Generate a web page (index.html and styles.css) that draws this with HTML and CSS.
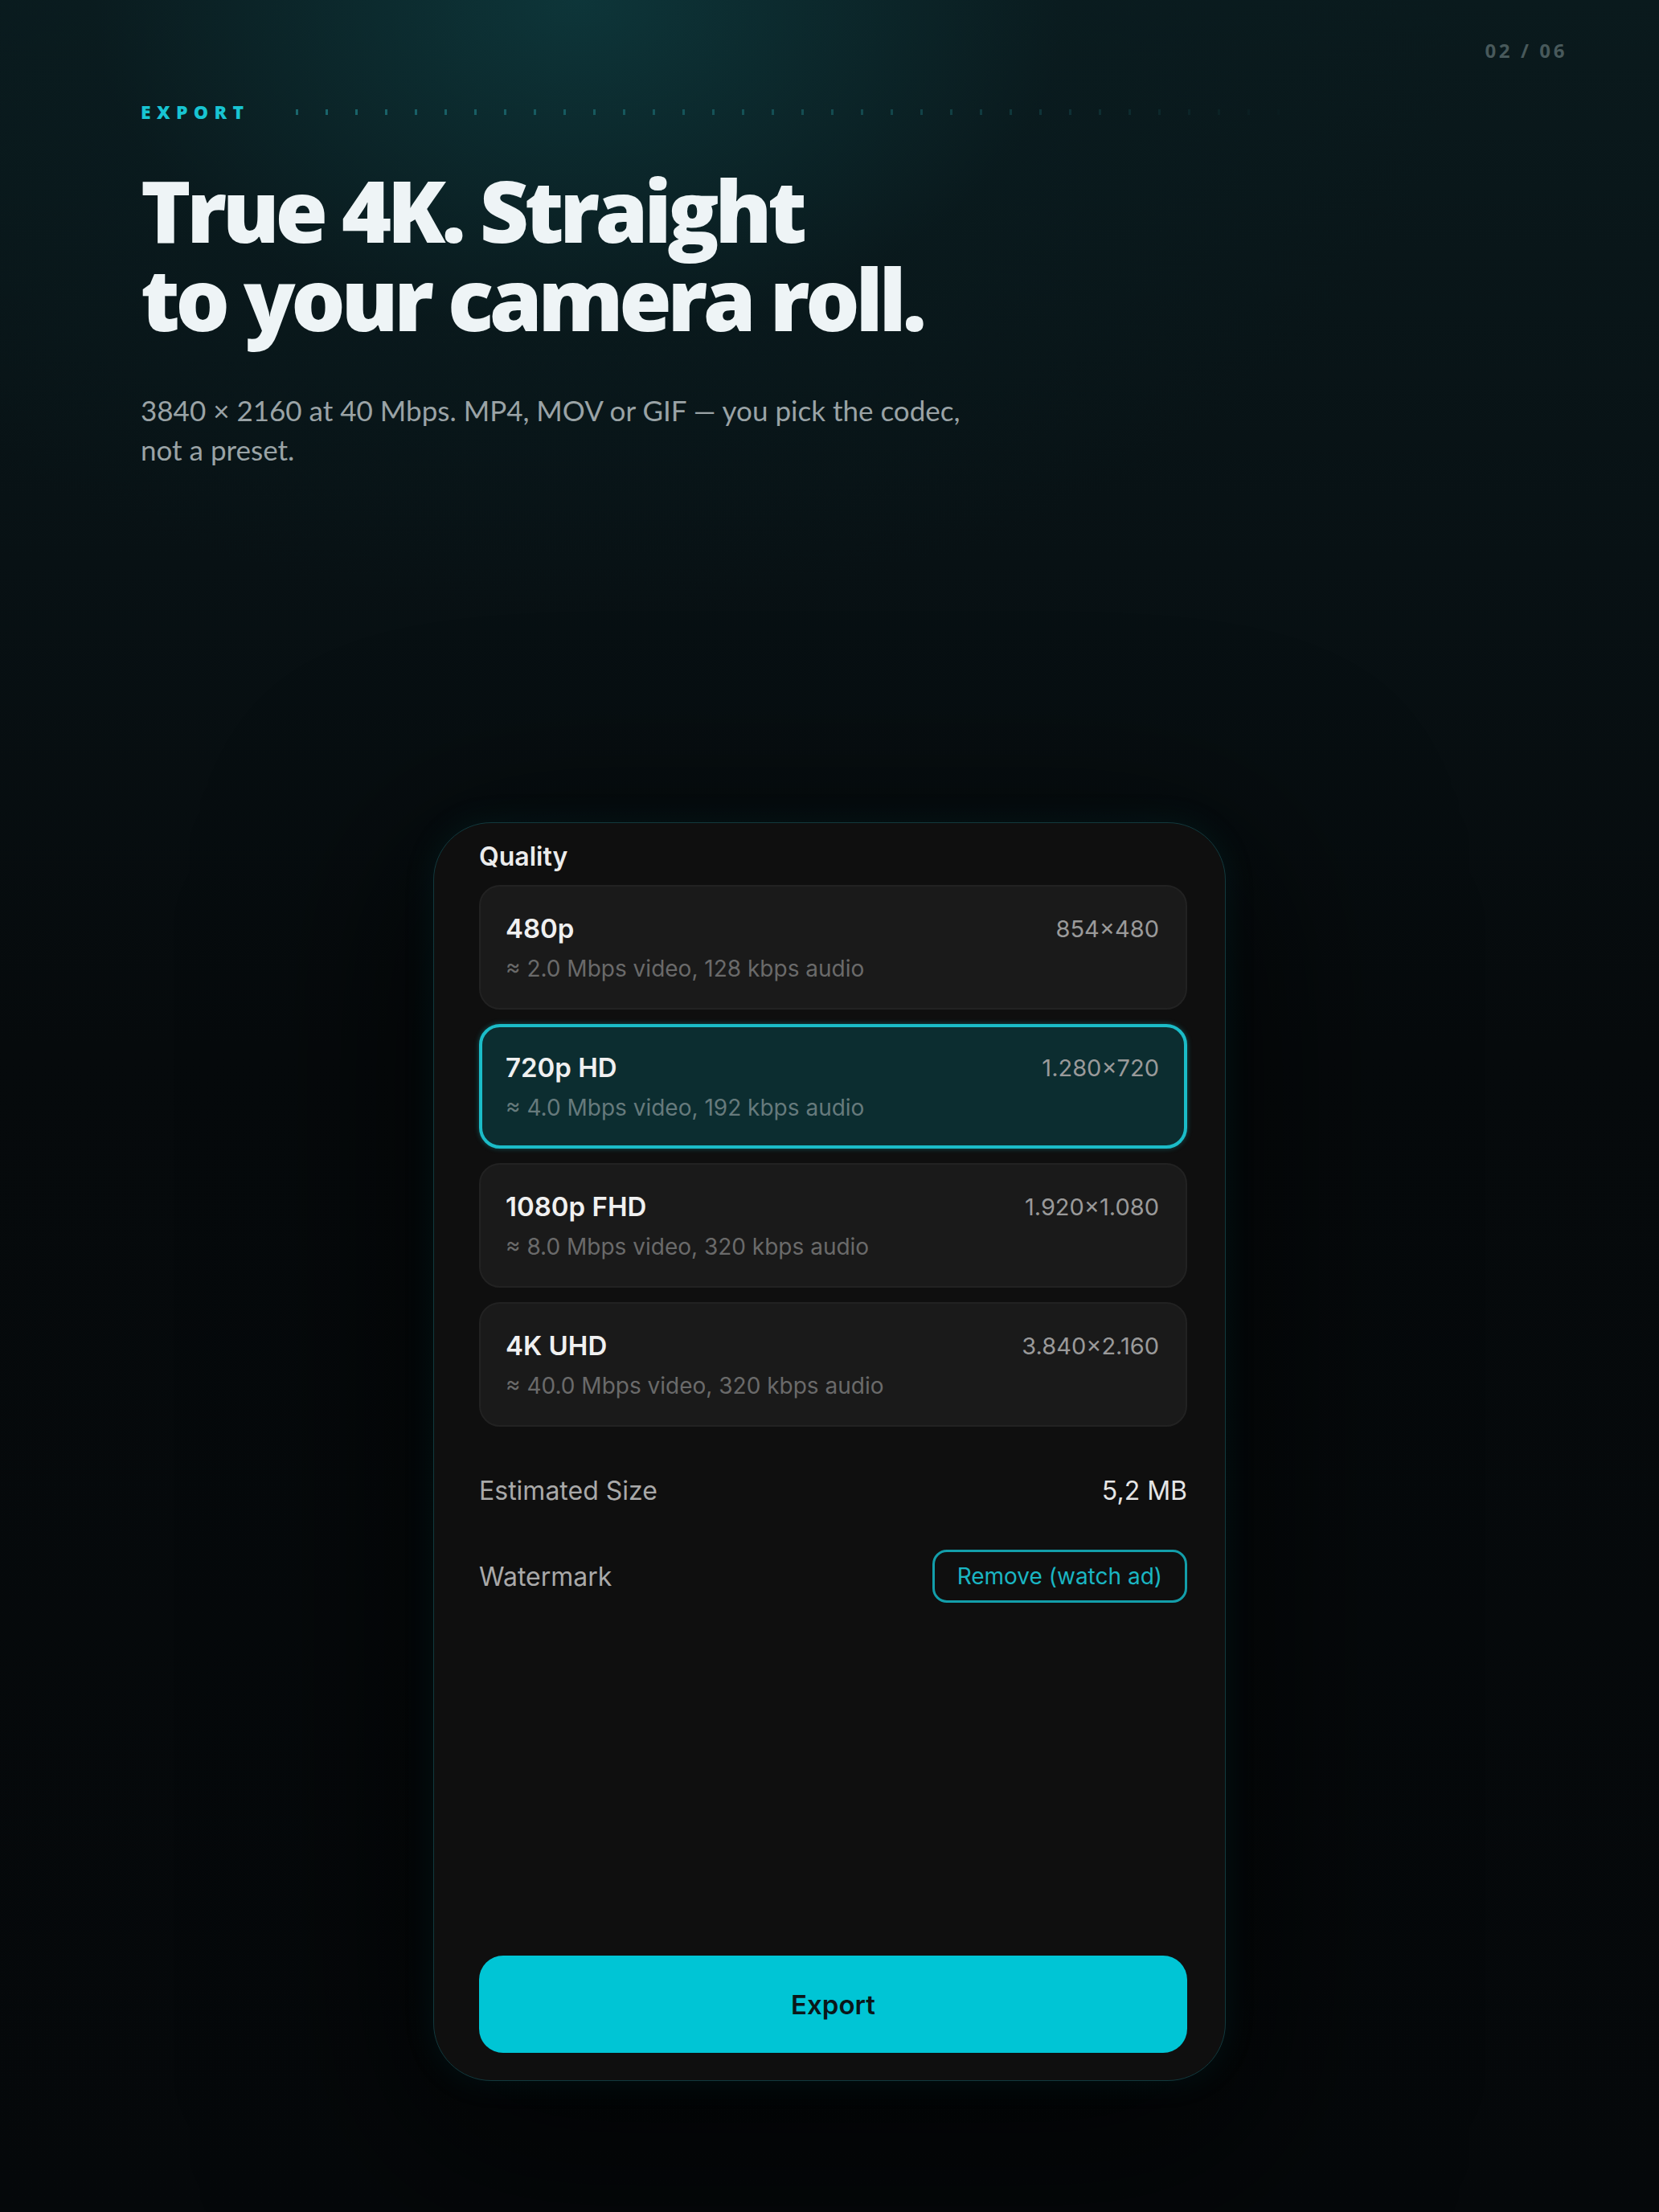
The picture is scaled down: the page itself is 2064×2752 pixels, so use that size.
FILE: index.html
```html
<!DOCTYPE html>
<html lang="en">
<head>
  <meta charset="UTF-8" />
  <meta name="viewport" content="width=device-width, initial-scale=1.0" />
  <title>Export — 4K</title>
  <link rel="stylesheet" href="styles.css">
</head>
<body>
  <div class="page">
    <div class="topbar">
      <span class="counter">02 / 06</span>
    </div>

    <section class="hero">
      <div class="eyebrow">
        <span class="eyebrow-label">EXPORT</span>
        <span class="eyebrow-ticks"></span>
      </div>
      <h1 class="headline">True 4K. Straight<br>to your camera roll.</h1>
      <p class="lede">3840 × 2160 at 40 Mbps. MP4, MOV or GIF — you pick the codec,<br>not a preset.</p>
    </section>

    <div class="stage">
      <div class="phone">
        <div class="section-title">Quality</div>

        <div class="options">
          <div class="option">
            <div class="option-top">
              <span class="option-name">480p</span>
              <span class="option-res">854×480</span>
            </div>
            <div class="option-rate">≈ 2.0 Mbps video, 128 kbps audio</div>
          </div>
          <div class="option selected">
            <div class="option-top">
              <span class="option-name">720p HD</span>
              <span class="option-res">1.280×720</span>
            </div>
            <div class="option-rate">≈ 4.0 Mbps video, 192 kbps audio</div>
          </div>
          <div class="option">
            <div class="option-top">
              <span class="option-name">1080p FHD</span>
              <span class="option-res">1.920×1.080</span>
            </div>
            <div class="option-rate">≈ 8.0 Mbps video, 320 kbps audio</div>
          </div>
          <div class="option">
            <div class="option-top">
              <span class="option-name">4K UHD</span>
              <span class="option-res">3.840×2.160</span>
            </div>
            <div class="option-rate">≈ 40.0 Mbps video, 320 kbps audio</div>
          </div>
        </div>

        <div class="info-row size-row">
          <span class="info-label">Estimated Size</span>
          <span class="info-value">5,2 MB</span>
        </div>
        <div class="info-row">
          <span class="info-label">Watermark</span>
          <button class="ghost-btn">Remove (watch ad)</button>
        </div>

        <div class="spacer"></div>
        <button class="export-btn">Export</button>
      </div>
    </div>
  </div>
</body>
</html>
```

FILE: styles.css
```css
* {
  box-sizing: border-box;
}
body {
  margin: 0;
  background: #06090b;
}
.page {
  width: 2064px;
  height: 2752px;
  overflow: hidden;
  background:
    radial-gradient(ellipse 1100px 760px at 720px 0px, rgba(14, 58, 62, 0.85), rgba(10, 30, 34, 0.4) 55%, rgba(8, 14, 16, 0) 100%),
    linear-gradient(180deg, #0a1a1d 0px, #081114 700px, #060a0c 1300px, #05080a 2752px);
  font-family: "Open Sans", "Noto Sans", sans-serif;
}

/* header */
.topbar {
  display: flex;
  justify-content: flex-end;
  padding: 48px 114px 0 0;
  height: 96px;
}
.counter {
  font-family: "Open Sans", sans-serif;
  font-weight: 700;
  font-size: 24px;
  line-height: 30px;
  letter-spacing: 0.15em;
  color: #48595b;
}

.hero {
  padding-left: 175px;
}
.eyebrow {
  display: flex;
  align-items: center;
  height: 40px;
  margin-top: 23px;
}
.eyebrow-label {
  font-family: "Open Sans", sans-serif;
  font-weight: 800;
  font-size: 23px;
  line-height: 30px;
  letter-spacing: 0.32em;
  color: #18c4d2;
}
.eyebrow-ticks {
  margin-left: 58px;
  width: 1260px;
  height: 7px;
  background: repeating-linear-gradient(90deg, #1b6a70 0 3px, transparent 3px 37px);
  -webkit-mask-image: linear-gradient(90deg, rgba(0,0,0,0.95), rgba(0,0,0,0.55) 55%, rgba(0,0,0,0) 100%);
  mask-image: linear-gradient(90deg, rgba(0,0,0,0.95), rgba(0,0,0,0.55) 55%, rgba(0,0,0,0) 100%);
}

.headline {
  margin: 47px 0 0;
  font-family: "Open Sans", sans-serif;
  font-weight: 800;
  font-size: 106px;
  line-height: 110px;
  letter-spacing: -0.05em;
  color: #eef4f6;
}
.lede {
  margin: 60px 0 0;
  font-family: Lato, "Open Sans", sans-serif;
  font-size: 35px;
  line-height: 49px;
  color: #9aa3a6;
}

/* phone */
.stage {
  display: flex;
  justify-content: center;
  padding-top: 439px;
}
.phone {
  width: 986px;
  height: 1566px;
  display: flex;
  flex-direction: column;
  padding: 22px 47px 34px 56px;
  background: #0f0f0f;
  border: 1.5px solid #12393d;
  border-radius: 72px;
  box-shadow:
    0 0 40px rgba(20, 150, 160, 0.10),
    0 60px 220px 60px rgba(0, 0, 0, 0.55);
  font-family: Inter, "Noto Sans", sans-serif;
}
.section-title {
  font-size: 32px;
  font-weight: 600;
  line-height: 40px;
  color: #ececec;
}
.options {
  display: flex;
  flex-direction: column;
  gap: 18px;
  margin-top: 15px;
}
.option {
  height: 155px;
  padding: 32px 33px 0 31px;
  background: #1a1a1a;
  border: 2px solid #222222;
  border-radius: 26px;
}
.option.selected {
  background: #0c2d30;
  border: 4px solid #1bbcc8;
  padding: 30px 31px 0 29px;
  box-shadow: 0 0 6px rgba(24, 185, 198, 0.4);
}
.option-top {
  display: flex;
  justify-content: space-between;
  align-items: center;
  height: 40px;
}
.option-name {
  font-size: 33px;
  font-weight: 600;
  color: #f0f0f0;
}
.option-res {
  font-size: 29px;
  color: #9a9a9a;
}
.option-rate {
  margin-top: 12px;
  font-size: 28px;
  line-height: 36px;
  color: #6a6a6a;
}
.option.selected .option-rate {
  color: #667a7c;
}

.info-row {
  display: flex;
  justify-content: space-between;
  align-items: center;
  height: 66px;
  margin-top: 41px;
}
.size-row {
  margin-top: 46px;
}
.info-label {
  font-size: 32px;
  color: #a9a9a9;
}
.info-value {
  font-size: 32px;
  color: #e6e6e6;
}
.ghost-btn {
  height: 66px;
  padding: 0 28px;
  background: transparent;
  border: 3px solid #139eaa;
  border-radius: 18px;
  font-family: Inter, sans-serif;
  font-size: 28px;
  color: #1ab6c3;
}
.spacer {
  flex: 1;
}
.export-btn {
  height: 121px;
  width: 100%;
  background: #00c5d5;
  border: none;
  border-radius: 30px;
  font-family: Inter, sans-serif;
  font-size: 33px;
  font-weight: 600;
  color: #0b1719;
}
```
